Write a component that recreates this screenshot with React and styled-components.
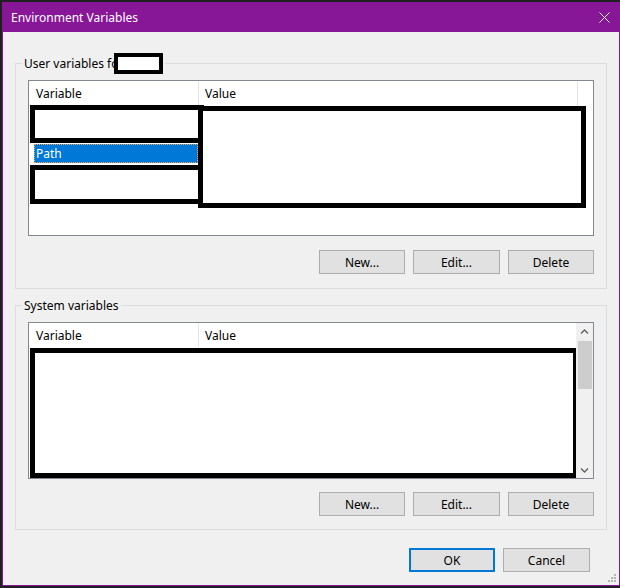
import styled, { createGlobalStyle } from 'styled-components';

const GlobalStyle = createGlobalStyle`
    html, body {
        margin: 0;
        padding: 0;
        background: #1f1f1f;
    }
    body {
        width: 620px;
        height: 588px;
        overflow: hidden;
        font-family: "Segoe UI", "Noto Sans", sans-serif;
        font-size: 12px;
        color: #000;
    }
    * {
        box-sizing: border-box;
    }
`;

const Window = styled.div`
    margin: 2px 0 0 2px;
    width: 618px;
    height: 584px;
    border: 1px solid #881798;
    background: #f0f0f0;
    display: flex;
    flex-direction: column;
    position: relative;
`;

const TitleBar = styled.div`
    height: 29px;
    background: #881798;
    color: #fff;
    display: flex;
    align-items: center;
    justify-content: space-between;
    padding: 0 9px 0 8px;
`;

const Title = styled.span`
    font-size: 12px;
`;

const Body = styled.div`
    flex: 1;
    padding: 20px 12px 0 12px;
    display: flex;
    flex-direction: column;
`;

const Group = styled.fieldset`
    margin: 0 0 ${(p) => p.$gap || 0}px 0;
    padding: 0;
    border: 1px solid #dcdcdc;
    min-width: 0;
`;

const Legend = styled.legend`
    margin-left: 6px;
    padding: 0 2px;
    height: 22px;
    display: flex;
    align-items: center;
`;

const GroupContent = styled.div`
    padding: 6px 12px ${(p) => p.$bottom}px 12px;
    display: flex;
    flex-direction: column;
`;

const Redact = styled.div`
    flex: none;
    background: #fff;
    border: ${(p) => p.$thick || 5}px solid #000;
    width: ${(p) => p.$w}px;
    height: ${(p) => p.$h}px;
    margin: ${(p) => p.$m || '0'};
`;

const ListView = styled.div`
    height: ${(p) => p.$h}px;
    border: 1px solid #828790;
    background: #fff;
    display: flex;
`;

const ListMain = styled.div`
    flex: 1;
    display: flex;
    flex-direction: column;
    min-width: 0;
`;

const Header = styled.div`
    height: 24px;
    display: flex;
    flex: none;
`;

const HeaderCell = styled.div`
    width: ${(p) => (p.$w ? `${p.$w}px` : 'auto')};
    flex: ${(p) => (p.$w ? 'none' : '1')};
    border-right: ${(p) => (p.$divider ? '1px solid #e5e5e5' : 'none')};
    padding-left: ${(p) => p.$pad || 6}px;
    display: flex;
    align-items: center;
`;

const Rows = styled.div`
    display: flex;
    flex: 1;
`;

const VariableColumn = styled.div`
    width: 169px;
    flex: none;
    display: flex;
    flex-direction: column;
`;

const SelectedRow = styled.div`
    width: 164px;
    height: 19px;
    margin: 1px 0 0 5px;
    background: #0078d7;
    color: #fff;
    outline: 1px dotted #f3a45c;
    outline-offset: -1px;
    padding-left: 2px;
    display: flex;
    align-items: center;
`;

const ScrollBar = styled.div`
    width: 17px;
    flex: none;
    background: #f0f0f0;
    display: flex;
    flex-direction: column;
`;

const ScrollArrow = styled.div`
    height: 17px;
    display: flex;
    align-items: center;
    justify-content: center;
`;

const ScrollTrack = styled.div`
    flex: 1;
    padding: 1px 1px 0 2px;
`;

const ScrollThumb = styled.div`
    height: 48px;
    background: #cdcdcd;
`;

const ButtonRow = styled.div`
    display: flex;
    justify-content: flex-end;
    gap: 8px;
    margin-top: ${(p) => p.$top}px;
    padding-right: ${(p) => p.$right || 0}px;
`;

const Button = styled.button`
    width: ${(p) => p.$w || 86}px;
    height: 24px;
    margin: 0;
    padding: 0;
    background: #e1e1e1;
    border: ${(p) => (p.$default ? '2px solid #0078d7' : '1px solid #adadad')};
    font-family: inherit;
    font-size: 12px;
    color: #000;
`;

const SizeGrip = styled.svg`
    position: absolute;
    right: 2px;
    bottom: 0px;
`;

const Chevron = ({ down }) => (
    <svg width="9" height="6" viewBox="0 0 9 6">
        <path
            d={down ? 'M1 1.5 L4.5 5 L8 1.5' : 'M1 4.5 L4.5 1 L8 4.5'}
            fill="none"
            stroke="#606060"
            strokeWidth="1.4"
        />
    </svg>
);

const App = () => {
    return (
        <>
            <GlobalStyle />
            <Window>
                <TitleBar>
                    <Title>Environment Variables</Title>
                    <svg width="11" height="11" viewBox="0 0 11 11">
                        <path d="M0.5 0.5 L10.5 10.5 M10.5 0.5 L0.5 10.5" stroke="#fff" strokeWidth="1" />
                    </svg>
                </TitleBar>
                <Body>
                    <Group $gap={5}>
                        <Legend>
                            User variables for
                            <Redact $thick={4} $w={49} $h={21} $m="0 0 0 -9px" />
                        </Legend>
                        <GroupContent $bottom={14}>
                            <ListView $h={156}>
                                <ListMain>
                                    <Header>
                                        <HeaderCell $w={170} $divider $pad={7}>Variable</HeaderCell>
                                        <HeaderCell $w={379} $divider>Value</HeaderCell>
                                        <HeaderCell />
                                    </Header>
                                    <Rows>
                                        <VariableColumn>
                                            <Redact $w={174} $h={38} $m="0 0 0 1px" />
                                            <SelectedRow>Path</SelectedRow>
                                            <Redact $w={177} $h={39} $m="2px 0 0 1px" />
                                        </VariableColumn>
                                        <Redact $w={388} $h={102} $m="1px 0 0 0" />
                                    </Rows>
                                </ListMain>
                            </ListView>
                            <ButtonRow $top={14}>
                                <Button>New...</Button>
                                <Button $w={87}>Edit...</Button>
                                <Button>Delete</Button>
                            </ButtonRow>
                        </GroupContent>
                    </Group>
                    <Group>
                        <Legend>System variables</Legend>
                        <GroupContent $bottom={13}>
                            <ListView $h={157}>
                                <ListMain>
                                    <Header>
                                        <HeaderCell $w={170} $divider $pad={7}>Variable</HeaderCell>
                                        <HeaderCell>Value</HeaderCell>
                                    </Header>
                                    <Rows>
                                        <Redact $w={548} $h={130} $m="1px 0 0 1px" />
                                    </Rows>
                                </ListMain>
                                <ScrollBar>
                                    <ScrollArrow>
                                        <Chevron />
                                    </ScrollArrow>
                                    <ScrollTrack>
                                        <ScrollThumb />
                                    </ScrollTrack>
                                    <ScrollArrow>
                                        <Chevron down />
                                    </ScrollArrow>
                                </ScrollBar>
                            </ListView>
                            <ButtonRow $top={13}>
                                <Button>New...</Button>
                                <Button $w={87}>Edit...</Button>
                                <Button>Delete</Button>
                            </ButtonRow>
                        </GroupContent>
                    </Group>
                    <ButtonRow $top={18} $right={17}>
                        <Button $default>OK</Button>
                        <Button $w={87}>Cancel</Button>
                    </ButtonRow>
                </Body>
                <SizeGrip width="12" height="12" viewBox="0 0 12 12">
                    <g fill="#b4b4b4">
                        <rect x="9" y="1" width="2" height="2" />
                        <rect x="6" y="4" width="2" height="2" />
                        <rect x="9" y="4" width="2" height="2" />
                        <rect x="3" y="7" width="2" height="2" />
                        <rect x="6" y="7" width="2" height="2" />
                        <rect x="9" y="7" width="2" height="2" />
                    </g>
                </SizeGrip>
            </Window>
        </>
    );
};

export default App;
